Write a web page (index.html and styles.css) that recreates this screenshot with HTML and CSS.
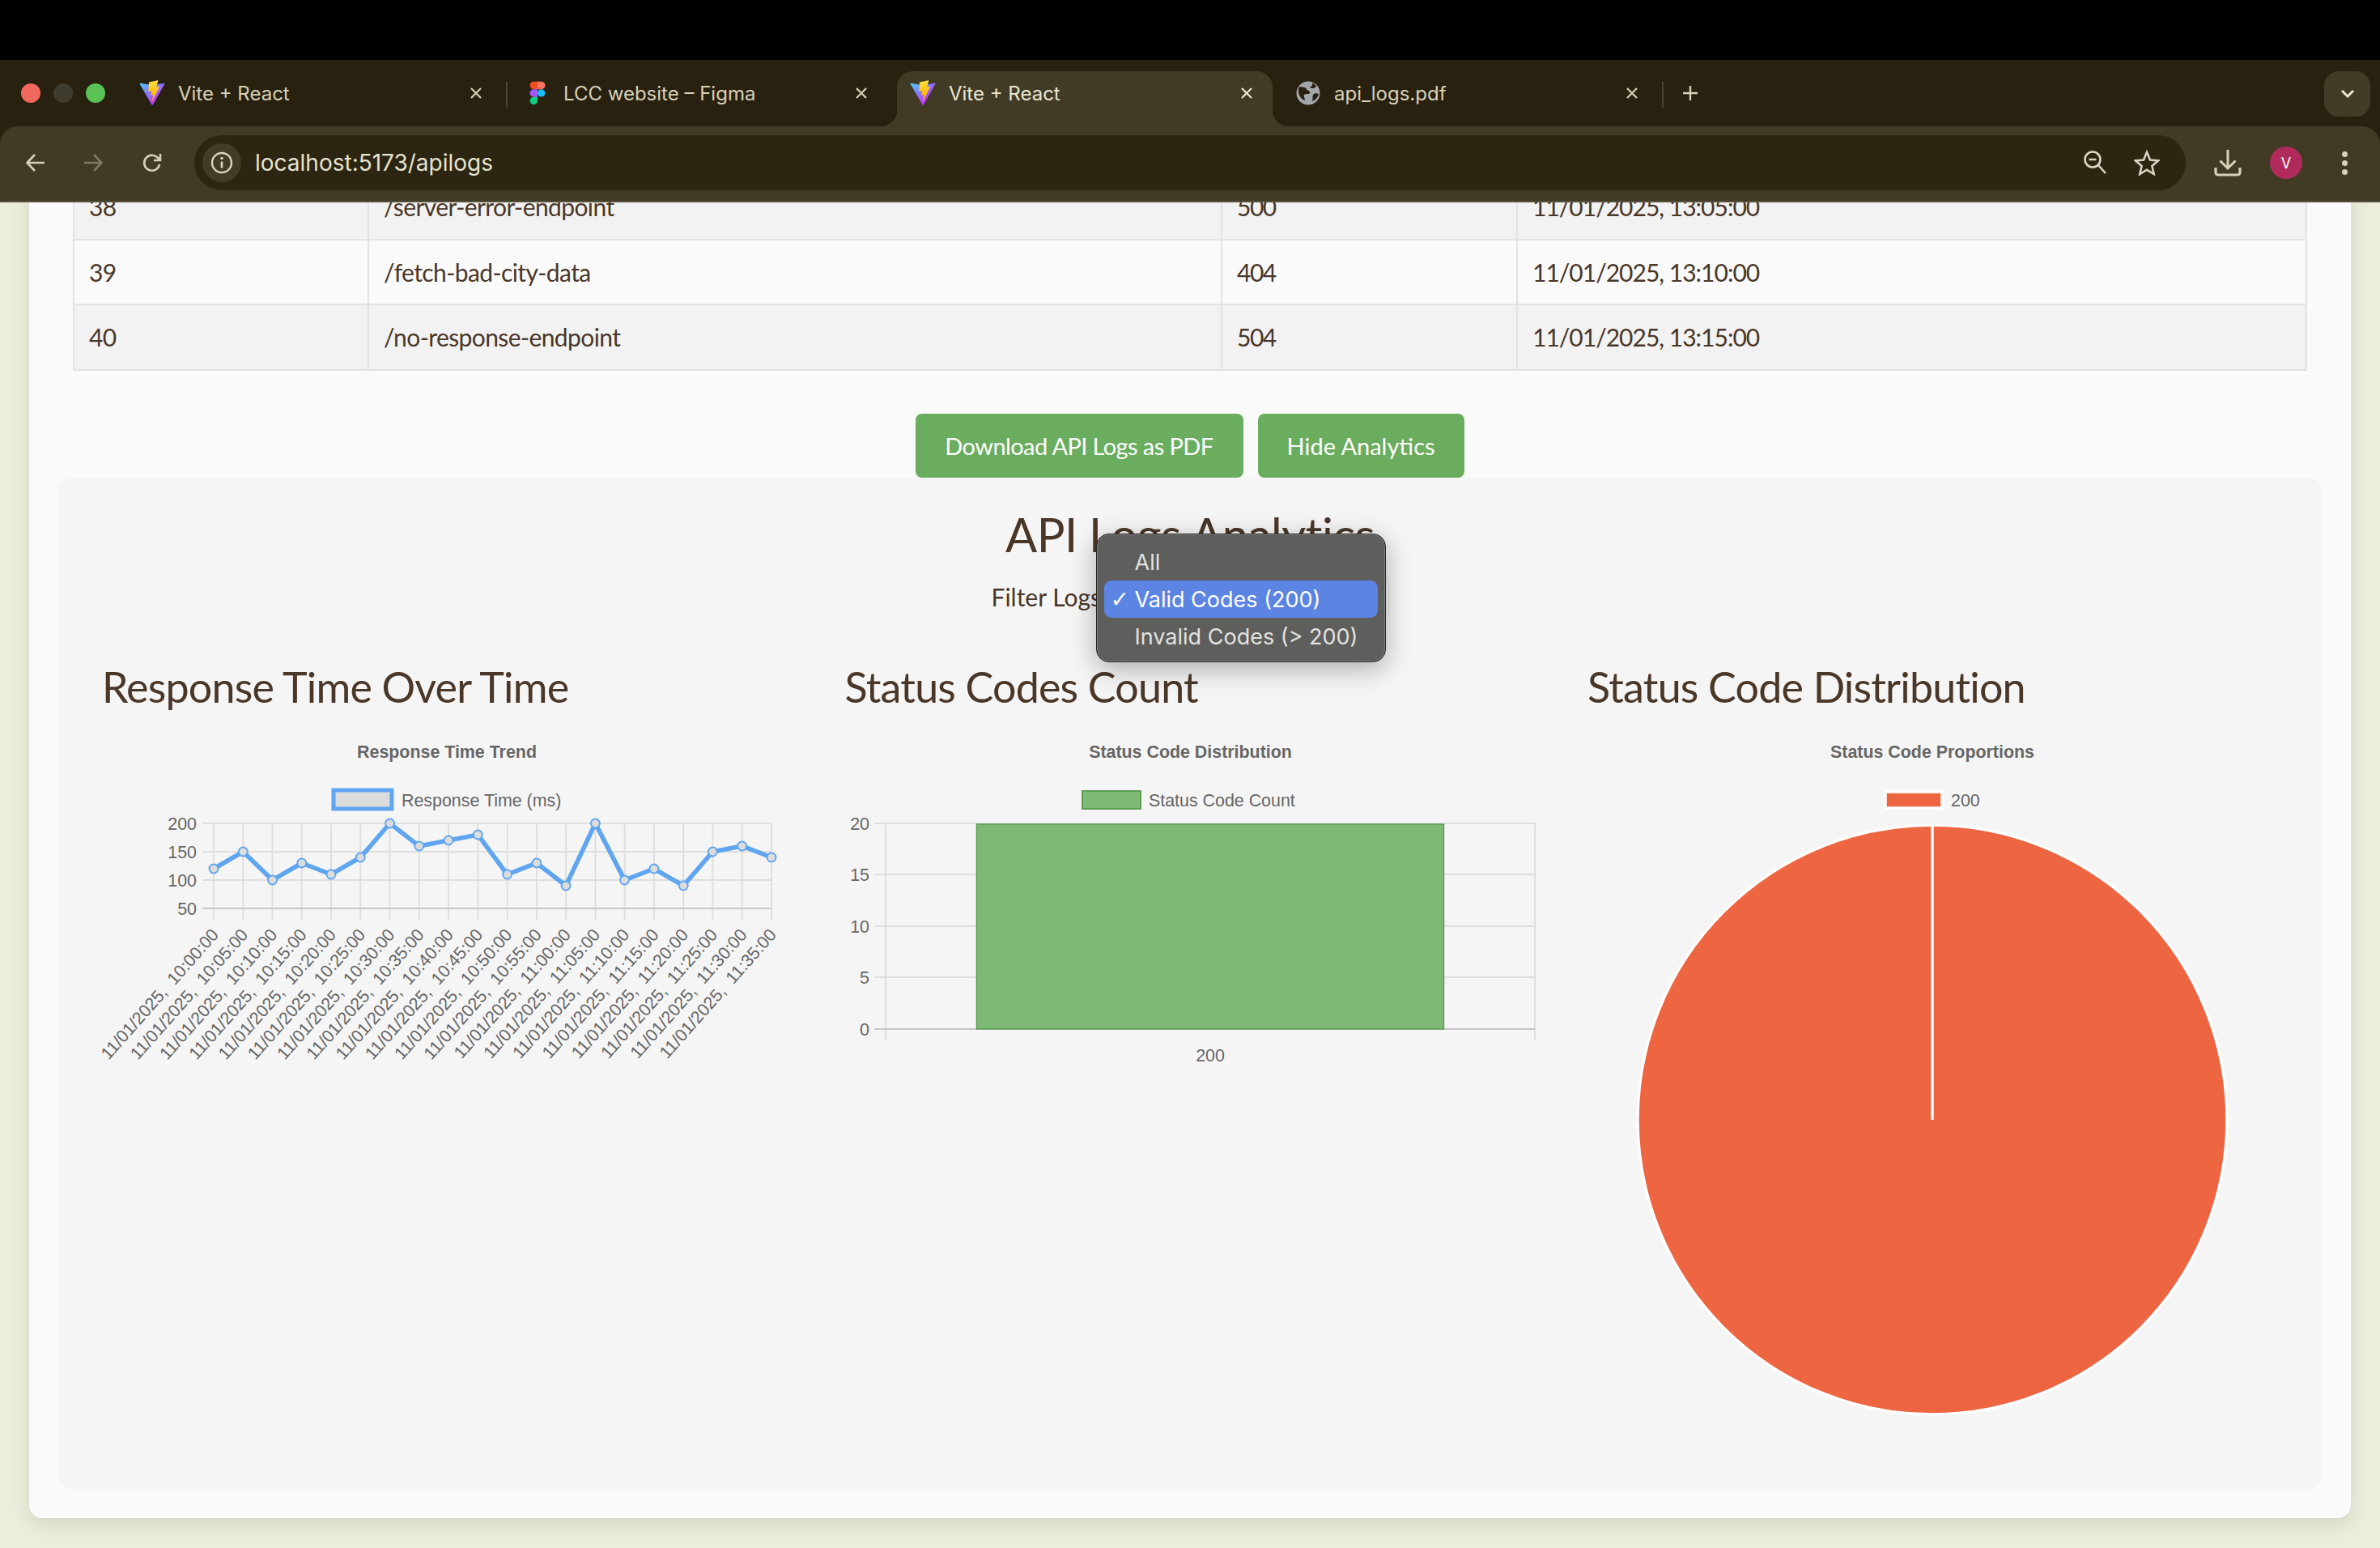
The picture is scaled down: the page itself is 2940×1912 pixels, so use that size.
FILE: index.html
```html
<!DOCTYPE html>
<html lang="en">
<head>
<meta charset="utf-8">
<title>Vite + React</title>
<link rel="stylesheet" href="styles.css">
</head>
<body>
<div class="osbar"></div>
<header class="browser">
  <svg width="0" height="0" class="defs">
    <defs>
      <linearGradient id="viteA" x1="6" y1="33" x2="235" y2="344" gradientUnits="userSpaceOnUse"><stop offset="0" stop-color="#41D1FF"/><stop offset="1" stop-color="#BD34FE"/></linearGradient>
      <linearGradient id="viteB" x1="194" y1="8" x2="236" y2="292" gradientUnits="userSpaceOnUse"><stop offset="0" stop-color="#FFEA83"/><stop offset=".08" stop-color="#FFDD35"/><stop offset="1" stop-color="#FFA800"/></linearGradient>
      <symbol id="vite" viewBox="0 0 410 404">
        <path d="M399.641 59.5246L215.643 388.545C211.844 395.338 202.084 395.378 198.228 388.618L10.5817 59.5563C6.38087 52.1896 12.6802 43.2665 21.0281 44.7586L205.223 77.6824C206.398 77.8924 207.601 77.8904 208.776 77.6763L389.119 44.8058C397.439 43.2894 403.768 52.1434 399.641 59.5246Z" fill="url(#viteA)"/>
        <path d="M292.965 1.5744L156.801 28.2552C154.563 28.6937 152.906 30.5903 152.771 32.8664L144.395 174.33C144.198 177.662 147.258 180.248 150.51 179.498L188.42 170.749C191.967 169.931 195.172 173.055 194.443 176.622L183.18 231.775C182.422 235.487 185.907 238.661 189.532 237.56L212.947 230.446C216.577 229.344 220.065 232.527 219.297 236.242L201.398 322.875C200.278 328.294 207.486 331.249 210.492 326.603L212.5 323.5L323.454 102.072C325.312 98.3645 322.108 94.137 318.036 94.9228L279.014 102.454C275.347 103.161 272.227 99.746 273.262 96.1583L298.731 7.86689C299.767 4.27314 296.636 0.855181 292.965 1.5744Z" fill="url(#viteB)"/>
      </symbol>
      <symbol id="close" viewBox="0 0 16 16"><path d="M2 2l12 12M14 2L2 14" fill="none" stroke="currentColor" stroke-width="2.2"/></symbol>
    </defs>
  </svg>
  <div class="tabstrip">
    <div class="lights"><i class="light red"></i><i class="light grey"></i><i class="light green"></i></div>
    <div class="tab">
      <svg class="favicon" width="32" height="32"><use href="#vite"/></svg>
      <span class="tab-title">Vite + React</span>
      <svg class="tab-close" width="16" height="16"><use href="#close"/></svg>
    </div>
    <i class="tab-sep"></i>
    <div class="tab">
      <svg class="favicon" width="32" height="32" viewBox="-13 0 64 57"><path d="M19 28.5a9.5 9.5 0 1 1 19 0 9.5 9.5 0 0 1-19 0z" fill="#1ABCFE"/><path d="M0 47.5A9.5 9.5 0 0 1 9.5 38H19v9.5a9.5 9.5 0 1 1-19 0z" fill="#0ACF83"/><path d="M19 0v19h9.5a9.5 9.5 0 1 0 0-19H19z" fill="#FF7262"/><path d="M0 9.5A9.5 9.5 0 0 0 9.5 19H19V0H9.5A9.5 9.5 0 0 0 0 9.5z" fill="#F24E1E"/><path d="M0 28.5A9.5 9.5 0 0 0 9.5 38H19V19H9.5A9.5 9.5 0 0 0 0 28.5z" fill="#A259FF"/></svg>
      <span class="tab-title">LCC website – Figma</span>
      <svg class="tab-close" width="16" height="16"><use href="#close"/></svg>
    </div>
    <i class="tab-sep hidden"></i>
    <div class="tab active">
      <svg class="favicon" width="32" height="32"><use href="#vite"/></svg>
      <span class="tab-title">Vite + React</span>
      <svg class="tab-close" width="16" height="16"><use href="#close"/></svg>
    </div>
    <i class="tab-sep hidden"></i>
    <div class="tab">
      <svg class="favicon" width="32" height="32" viewBox="0 0 32 32"><circle cx="16" cy="16" r="14.5" fill="#a2a7ab"/><path d="M5 8c4 1 7 0 9 3 1 2 5 2 4 5-1 2-5 0-7 2-1 2 1 4 1 7-4-1-8-6-8-11 0-2 0-4 1-6zM21 3c1 3-1 5-3 6 2 2 6 1 8-1-1-2-3-4-5-5zM29 17c-3-1-6-1-7 1-1 3 0 5-1 8 4-1 7-5 8-9z" fill="#282110"/></svg>
      <span class="tab-title">api_logs.pdf</span>
      <svg class="tab-close" width="16" height="16"><use href="#close"/></svg>
    </div>
    <i class="tab-sep"></i>
    <svg class="newtab" width="22" height="22" viewBox="0 0 22 22"><path d="M11 2v18M2 11h18" fill="none" stroke="currentColor" stroke-width="2.4"/></svg>
    <div class="tab-search"><svg width="20" height="14" viewBox="0 0 20 14"><path d="M3 3l7 7 7-7" fill="none" stroke="currentColor" stroke-width="3"/></svg></div>
  </div>
  <div class="toolbar">
    <svg class="nav-icon" width="28" height="28" viewBox="0 0 28 28"><path d="M25 14H4M13 4L3.5 14 13 24" fill="none" stroke="currentColor" stroke-width="2.6"/></svg>
    <svg class="nav-icon dim" width="28" height="28" viewBox="0 0 28 28"><path d="M3 14h21M15 4l9.500 10L15 24" fill="none" stroke="currentColor" stroke-width="2.6"/></svg>
    <svg class="nav-icon" width="28" height="28" viewBox="0 0 28 28"><path d="M23 16a9.500 9.500 0 1 1-2.800-8.700L24 10.500M24 3v8h-8" fill="none" stroke="currentColor" stroke-width="2.600"/></svg>
    <div class="omnibox">
      <span class="site-chip"><svg width="28" height="28" viewBox="0 0 28 28"><circle cx="14" cy="14" r="12" fill="none" stroke="currentColor" stroke-width="2.400"/><path d="M14 12.500v8" stroke="currentColor" stroke-width="2.600"/><circle cx="14" cy="8.500" r="1.700" fill="currentColor"/></svg></span>
      <span class="url">localhost:5173/apilogs</span>
      <svg class="omni-icon" width="32" height="32" viewBox="0 0 32 32"><circle cx="13" cy="12" r="9.500" fill="none" stroke="currentColor" stroke-width="2.600"/><path d="M8.500 12h9M20 19l9 10" fill="none" stroke="currentColor" stroke-width="2.600"/></svg>
      <svg class="omni-icon star" width="32" height="32" viewBox="0 0 32 32"><path d="M16 3l4 9.500 10 .9-7.600 6.600 2.300 10L16 24.700 7.300 30l2.300-10L2 13.400l10-.9z" fill="none" stroke="currentColor" stroke-width="2.600" stroke-linejoin="miter"/></svg>
    </div>
    <svg class="download" width="34" height="34" viewBox="0 0 34 34"><path d="M17 1v22M7.500 14.500L17 24l9.500-9.500" fill="none" stroke="currentColor" stroke-width="3"/><path d="M2 23v6a3 3 0 0 0 3 3h24a3 3 0 0 0 3-3v-6" fill="none" stroke="currentColor" stroke-width="3.200"/></svg>
    <span class="avatar">V</span>
    <span class="kebab"><i></i><i></i><i></i></span>
  </div>
</header>

<main class="viewport">
  <div class="card">
    <table class="logs">
      <colgroup><col class="c-id"><col class="c-ep"><col class="c-st"><col class="c-ts"></colgroup>
      <tbody>
        <tr class="odd"><td>38</td><td>/server-error-endpoint</td><td class="status">500</td><td class="stamp">11/01/2025, 13:05:00</td></tr>
        <tr><td>39</td><td>/fetch-bad-city-data</td><td class="status">404</td><td class="stamp">11/01/2025, 13:10:00</td></tr>
        <tr class="odd"><td>40</td><td>/no-response-endpoint</td><td class="status">504</td><td class="stamp">11/01/2025, 13:15:00</td></tr>
      </tbody>
    </table>
    <div class="actions">
      <button class="btn btn-wide">Download API Logs as PDF</button>
      <button class="btn">Hide Analytics</button>
    </div>
    <section class="panel">
      <h2 class="panel-title">API Logs Analytics</h2>
      <div class="filter">
        <span class="filter-label">Filter Logs:</span>
        <div class="select">
          <ul class="menu">
            <li>All</li>
            <li class="selected"><span class="check">✓</span>Valid Codes (200)</li>
            <li>Invalid Codes (&gt; 200)</li>
          </ul>
        </div>
      </div>
      <div class="charts">
        <article class="chart">
          <h3>Response Time Over Time</h3>
          <svg class="plot" viewBox="126 900 853 860" width="853" height="860">
            <text class="c-title" x="552" y="937">Response Time Trend</text>
            <rect x="412" y="977" width="72" height="23" fill="#dcdcdc" stroke="#5fa5f0" stroke-width="5"/>
            <text class="c-legend" x="496" y="997">Response Time (ms)</text>
            <g class="grid">
              <path d="M250 1018H953M250 1053H953M250 1088H953M264 1018V1137M300.300 1018V1137M336.500 1018V1137M372.800 1018V1137M409 1018V1137M445.300 1018V1137M481.600 1018V1137M517.800 1018V1137M554.100 1018V1137M590.300 1018V1137M626.600 1018V1137M662.900 1018V1137M699.100 1018V1137M735.400 1018V1137M771.600 1018V1137M807.900 1018V1137M844.200 1018V1137M880.400 1018V1137M916.700 1018V1137M953 1018V1137"/>
            </g>
            <path class="axis" d="M250 1123H953"/>
            <g class="c-tick end">
              <text x="243" y="1026">200</text><text x="243" y="1061">150</text><text x="243" y="1096">100</text><text x="243" y="1131">50</text>
            </g>
            <polyline class="line" points="264,1074 300.300,1053 336.500,1088 372.800,1067 409,1081 445.300,1060 481.600,1018 517.800,1046 554.100,1039 590.300,1032 626.600,1081 662.900,1067 699.100,1095 735.400,1018 771.600,1088 807.900,1074 844.200,1095 880.400,1053 916.700,1046 953,1060"/>
            <g class="points">
              <circle cx="264" cy="1074" r="5.500"/><circle cx="300.300" cy="1053" r="5.500"/><circle cx="336.500" cy="1088" r="5.500"/><circle cx="372.800" cy="1067" r="5.500"/><circle cx="409" cy="1081" r="5.500"/><circle cx="445.300" cy="1060" r="5.500"/><circle cx="481.600" cy="1018" r="5.500"/><circle cx="517.800" cy="1046" r="5.500"/><circle cx="554.100" cy="1039" r="5.500"/><circle cx="590.300" cy="1032" r="5.500"/><circle cx="626.600" cy="1081" r="5.500"/><circle cx="662.900" cy="1067" r="5.500"/><circle cx="699.100" cy="1095" r="5.500"/><circle cx="735.400" cy="1018" r="5.500"/><circle cx="771.600" cy="1088" r="5.500"/><circle cx="807.900" cy="1074" r="5.500"/><circle cx="844.200" cy="1095" r="5.500"/><circle cx="880.400" cy="1053" r="5.500"/><circle cx="916.700" cy="1046" r="5.500"/><circle cx="953" cy="1060" r="5.500"/>
            </g>
            <g class="c-tick end xlabels">
              <text transform="translate(264 1150) rotate(-48.500)" x="0" y="9.500">11/01/2025, 10:00:00</text>
              <text transform="translate(300.300 1150) rotate(-48.500)" x="0" y="9.500">11/01/2025, 10:05:00</text>
              <text transform="translate(336.500 1150) rotate(-48.500)" x="0" y="9.500">11/01/2025, 10:10:00</text>
              <text transform="translate(372.800 1150) rotate(-48.500)" x="0" y="9.500">11/01/2025, 10:15:00</text>
              <text transform="translate(409 1150) rotate(-48.500)" x="0" y="9.500">11/01/2025, 10:20:00</text>
              <text transform="translate(445.300 1150) rotate(-48.500)" x="0" y="9.500">11/01/2025, 10:25:00</text>
              <text transform="translate(481.600 1150) rotate(-48.500)" x="0" y="9.500">11/01/2025, 10:30:00</text>
              <text transform="translate(517.800 1150) rotate(-48.500)" x="0" y="9.500">11/01/2025, 10:35:00</text>
              <text transform="translate(554.100 1150) rotate(-48.500)" x="0" y="9.500">11/01/2025, 10:40:00</text>
              <text transform="translate(590.300 1150) rotate(-48.500)" x="0" y="9.500">11/01/2025, 10:45:00</text>
              <text transform="translate(626.600 1150) rotate(-48.500)" x="0" y="9.500">11/01/2025, 10:50:00</text>
              <text transform="translate(662.900 1150) rotate(-48.500)" x="0" y="9.500">11/01/2025, 10:55:00</text>
              <text transform="translate(699.100 1150) rotate(-48.500)" x="0" y="9.500">11/01/2025, 11:00:00</text>
              <text transform="translate(735.400 1150) rotate(-48.500)" x="0" y="9.500">11/01/2025, 11:05:00</text>
              <text transform="translate(771.600 1150) rotate(-48.500)" x="0" y="9.500">11/01/2025, 11:10:00</text>
              <text transform="translate(807.900 1150) rotate(-48.500)" x="0" y="9.500">11/01/2025, 11:15:00</text>
              <text transform="translate(844.200 1150) rotate(-48.500)" x="0" y="9.500">11/01/2025, 11:20:00</text>
              <text transform="translate(880.400 1150) rotate(-48.500)" x="0" y="9.500">11/01/2025, 11:25:00</text>
              <text transform="translate(916.700 1150) rotate(-48.500)" x="0" y="9.500">11/01/2025, 11:30:00</text>
              <text transform="translate(953 1150) rotate(-48.500)" x="0" y="9.500">11/01/2025, 11:35:00</text>
            </g>
          </svg>
        </article>
        <article class="chart">
          <h3>Status Codes Count</h3>
          <svg class="plot" viewBox="1043 900 853 860" width="853" height="860">
            <text class="c-title" x="1469.500" y="937">Status Code Distribution</text>
            <rect x="1336" y="978" width="72" height="22" fill="#7db874" stroke="#5d9e55" stroke-width="2"/>
            <text class="c-legend" x="1418" y="997">Status Code Count</text>
            <g class="grid"><path d="M1079 1018H1895M1079 1081H1895M1079 1145H1895M1079 1208H1895M1093 1018V1286M1895 1018V1286"/></g>
            <path class="axis" d="M1079 1272H1895"/>
            <rect x="1205.500" y="1019" width="577" height="253" fill="#7db874" stroke="#5d9e55" stroke-width="1.500"/>
            <g class="c-tick end">
              <text x="1073" y="1026">20</text><text x="1073" y="1089">15</text><text x="1073" y="1153">10</text><text x="1073" y="1216">5</text><text x="1073" y="1280">0</text>
            </g>
            <text class="c-tick mid" x="1494" y="1312">200</text>
          </svg>
        </article>
        <article class="chart">
          <h3>Status Code Distribution</h3>
          <svg class="plot" viewBox="1961 900 853 860" width="853" height="860">
            <text class="c-title" x="2387" y="937">Status Code Proportions</text>
            <rect x="2329" y="979" width="70" height="20" fill="#ee6542" stroke="#fff" stroke-width="3.500"/>
            <text class="c-legend" x="2410" y="997">200</text>
            <circle cx="2387" cy="1384" r="364" fill="#ee6542" stroke="#fff" stroke-width="3.500"/>
            <path d="M2387 1020V1384" stroke="#fff" stroke-width="3.500"/>
          </svg>
        </article>
      </div>
    </section>
  </div>
</main>
</body>
</html>
```
FILE: styles.css
```css
* { box-sizing: border-box; }
html, body { margin: 0; height: 1912px; overflow: hidden; }
body { background: #ebeeda; display: flex; flex-direction: column; font-family: "Lato", "Noto Sans", sans-serif; color: #4a3728; }
.defs { position: absolute; }

.osbar { height: 74px; background: #000; flex: none; }
.browser { flex: none; font-family: "Inter", "Roboto", sans-serif; position: relative; z-index: 2; background: #282110; }

.tabstrip { height: 82px; background: #282110; color: #d8d1b7; display: flex; align-items: flex-start; padding-top: 14px; position: relative; }
.lights { width: 156px; flex: none; display: flex; gap: 16px; padding: 15px 0 0 26px; }
.light { width: 24px; height: 24px; border-radius: 50%; }
.red { background: #f1685e; }
.grey { background: #3f3c2d; }
.green { background: #5ac153; }
.tab { width: 464px; height: 68px; flex: none; display: flex; align-items: center; padding: 0 24px 14px 16px; gap: 16px; font-size: 24px; position: relative; }
.favicon { flex: none; }
.tab-title { flex: 1; white-space: nowrap; }
.tab-close { flex: none; }
.tab.active { background: #413b25; border-radius: 20px 20px 0 0; color: #ece7d3; }
.tab.active::before, .tab.active::after { content: ""; position: absolute; bottom: 0; width: 20px; height: 20px; }
.tab.active::before { left: -20px; background: radial-gradient(circle at 0 0, transparent 20px, #413b25 20.500px); }
.tab.active::after { right: -20px; background: radial-gradient(circle at 100% 0, transparent 20px, #413b25 20.500px); }
.tab-sep { width: 2px; height: 32px; margin: 13px 5px 0; background: #4a4530; flex: none; }
.tab-sep.hidden { visibility: hidden; }
.newtab { margin: 16px 0 0 17px; flex: none; }
.tab-search { margin-left: auto; margin-right: 12px; width: 57px; height: 56px; background: #413c26; border-radius: 18px; display: flex; align-items: center; justify-content: center; color: #ece7d3; }

.toolbar { height: 94px; background: #413b25; border-bottom: 2px solid #55513e; border-radius: 22px 22px 0 0; display: flex; align-items: center; color: #d8d1b7; padding: 0 0 2px 30px; }
.nav-icon { flex: none; margin-right: 43px; }
.nav-icon.dim { margin-right: 45px; color: #7d7864; }
.nav-icon:nth-child(3) { margin-right: 38px; }
.omnibox { width: 2460px; height: 68px; flex: none; background: #2c2511; border-radius: 34px; display: flex; align-items: center; padding-left: 10px; color: #d9d5c4; }
.site-chip { width: 48px; height: 48px; border-radius: 50%; background: #413c26; display: flex; align-items: center; justify-content: center; flex: none; }
.url { flex: 1; font-size: 28px; margin-left: 17px; color: #e6e2d0; white-space: nowrap; }
.omni-icon { flex: none; margin-right: 32px; }
.omni-icon.star { margin-right: 32px; }
.download { flex: none; margin-left: 35px; }
.avatar { width: 40px; height: 40px; border-radius: 50%; background: #b02a5c; color: #fff; font-size: 18px; display: flex; align-items: center; justify-content: center; flex: none; margin-left: 35px; }
.kebab { display: flex; flex-direction: column; gap: 4px; flex: none; margin-left: 49px; }
.kebab i { width: 7px; height: 7px; border-radius: 50%; background: #d8d1b7; }

.viewport { flex: 1; min-height: 0; overflow: hidden; }
.card { margin: -36px 36px 0; background: #fafafa; border-radius: 0 0 16px 16px; box-shadow: 0 8px 24px rgba(0,0,0,.1); padding: 0 36px 36px; }
.logs { border-collapse: collapse; table-layout: fixed; width: 2758px; margin: 0 18px; font-size: 30px; letter-spacing: -.6px; }
.c-id { width: 364px; }
.c-ep { width: 1054px; }
.c-st { width: 365px; }
.c-ts { width: 975px; }
.logs td { height: 80.500px; padding: 0 18px; border: 2px solid #e2e2e2; }
.logs td.status { letter-spacing: -1.500px; }
.logs td.stamp { letter-spacing: -1px; }
.logs tr.odd td { background: #f2f2f2; }
.actions { display: flex; justify-content: center; gap: 18px; margin-top: 53px; }
.btn { height: 79px; padding: 0 36px; border: 0; border-radius: 8px; background: #6aad5e; color: #fff; font: inherit; font-size: 29px; }
.btn-wide { letter-spacing: -.6px; padding: 0 37px 0 36px; }

.panel { background: #f5f5f5; border-radius: 16px; padding: 30px 54px 80px; height: 1249px; }
.panel-title { margin: 0; height: 80px; line-height: 80px; font-size: 58px; letter-spacing: -.5px; font-weight: 400; text-align: center; }
.filter { display: flex; justify-content: center; align-items: center; height: 50px; margin-top: 12px; font-size: 30px; gap: 8px; }
.select { position: relative; width: 340px; height: 50px; border: 1px solid #e2e2e2; border-radius: 8px; }
.menu { position: absolute; left: -23px; top: -54px; width: 358px; height: 159px; margin: 0; padding: 11px 9px; list-style: none; background: #5e5e5c; border: 1px solid #2a2a2a; border-radius: 16px; box-shadow: inset 0 0 0 1px #7c7c7a, 0 8px 32px rgba(0,0,0,.3); font-family: "Inter", sans-serif; font-size: 27px; color: #e2e2e0; }
.menu li { height: 46px; line-height: 48px; padding-left: 38px; position: relative; border-radius: 9px; white-space: nowrap; }
.menu li.selected { background: #5b84e3; color: #fff; }
.check { position: absolute; left: 8px; font-size: 28px; font-family: "DejaVu Sans", sans-serif; }

.charts { display: grid; grid-template-columns: repeat(3, 853px); column-gap: 64.500px; margin-top: 56px; }
.chart h3 { margin: 0 0 21px; height: 60px; line-height: 60px; font-size: 52px; letter-spacing: -.8px; font-weight: 400; white-space: nowrap; }
.plot { display: block; font-family: "Liberation Sans", Arial, sans-serif; }
.c-title { font-size: 21.400px; font-weight: 700; fill: #666; text-anchor: middle; }
.c-legend { font-size: 21.400px; fill: #666; }
.c-tick { font-size: 21.400px; fill: #666; }
.xlabels { word-spacing: 6px; }
.end { text-anchor: end; }
.mid { text-anchor: middle; }
.grid path { fill: none; stroke: #dedede; stroke-width: 1.900px; }
.axis { fill: none; stroke: #c8c8c8; stroke-width: 1.900px; }
.line { fill: none; stroke: #5fa5f0; stroke-width: 5.600px; stroke-linejoin: miter; }
.points circle { fill: #dcdcdc; stroke: #5fa5f0; stroke-width: 1.900px; }
```
